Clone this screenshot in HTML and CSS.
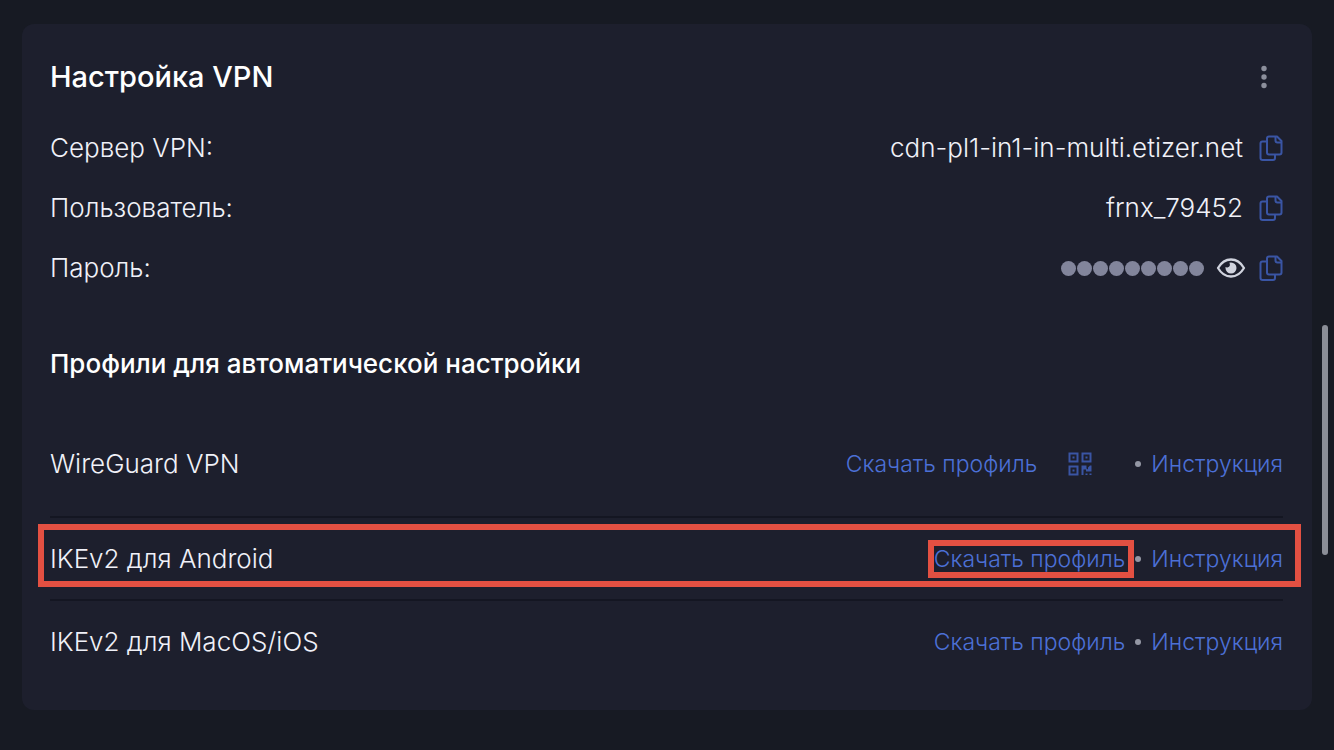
FILE: index.html
```
<!DOCTYPE html>
<html lang="ru">
<head>
  <meta charset="UTF-8">
  <meta name="viewport" content="width=device-width, initial-scale=1.0">
  <title>Настройка VPN</title>
  <link rel="stylesheet" href="styles.css">
</head>
<body>
  <!-- shared icons -->
  <svg class="sprite" aria-hidden="true">
    <symbol id="icon-copy" viewBox="0 0 24 26">
      <g fill="none" stroke="currentColor" stroke-width="2" stroke-linejoin="round">
        <path d="M10 1.500h8l4.500 4.500v11.500a2 2 0 0 1-2 2H10a2 2 0 0 1-2-2v-14a2 2 0 0 1 2-2z"/>
        <path d="M16.500 1.500v4a2 2 0 0 0 2 2h4"/>
        <path d="M8 6.500H3.500a2 2 0 0 0-2 2v14.500a2 2 0 0 0 2 2H14a2 2 0 0 0 2-2v-3.500"/>
      </g>
    </symbol>
  </svg>

  <main class="card">
    <header class="card-header">
      <h1>Настройка VPN</h1>
      <button class="icon-btn menu-btn" type="button" aria-label="Меню">
        <svg width="6" height="24" viewBox="0 0 6 24" fill="currentColor"><circle cx="3" cy="3.500" r="2.700"/><circle cx="3" cy="12" r="2.700"/><circle cx="3" cy="20.500" r="2.700"/></svg>
      </button>
    </header>

    <dl class="settings">
      <div class="setting">
        <dt>Сервер VPN:</dt>
        <dd>
          <span>cdn-pl1-in1-in-multi.etizer.net</span>
          <button class="icon-btn copy-btn" type="button" aria-label="Скопировать сервер"><svg width="24" height="26"><use href="#icon-copy"/></svg></button>
        </dd>
      </div>
      <div class="setting">
        <dt>Пользователь:</dt>
        <dd>
          <span>frnx_79452</span>
          <button class="icon-btn copy-btn" type="button" aria-label="Скопировать имя"><svg width="24" height="26"><use href="#icon-copy"/></svg></button>
        </dd>
      </div>
      <div class="setting">
        <dt>Пароль:</dt>
        <dd>
          <span class="mask"><i></i><i></i><i></i><i></i><i></i><i></i><i></i><i></i><i></i></span>
          <button class="icon-btn eye-btn" type="button" aria-label="Показать пароль">
            <svg width="30" height="22" viewBox="0 0 30 22"><path d="M2 11C5.500 5 10 2.500 15 2.500S24.500 5 28 11C24.500 17 20 19.500 15 19.500S5.500 17 2 11z" fill="none" stroke="currentColor" stroke-width="2.300" stroke-linejoin="round"/><path d="M15 5.500A5.500 5.500 0 1 1 9.500 11V10a2.600 2.600 0 0 0 2.500.2 2.600 2.600 0 0 0 1.800-3.100 3 3 0 0 0-.6-1.300z" fill="currentColor"/></svg>
          </button>
          <button class="icon-btn copy-btn" type="button" aria-label="Скопировать пароль"><svg width="24" height="26"><use href="#icon-copy"/></svg></button>
        </dd>
      </div>
    </dl>

    <h2>Профили для автоматической настройки</h2>

    <ul class="profiles">
      <li class="profile profile-tall">
        <span>WireGuard VPN</span>
        <div class="links">
          <a href="#">Скачать профиль</a>
          <button class="icon-btn qr-btn" type="button" aria-label="QR-код">
            <svg width="24" height="24" viewBox="0 0 24 24" fill="none" stroke="currentColor" stroke-width="2"><path d="M1.500 1.500h8v8h-8zM14.500 1.500h8v8h-8zM1.500 14.500h8v8h-8z"/><path d="M4.500 4.500h2v2h-2zM17.500 4.500h2v2h-2zM4.500 17.500h2v2h-2z" fill="currentColor" stroke="none"/><path d="M13.500 13.500h2v9.500h-2zM15.500 13.500h3v3l1.500 1v-2l2-2h1.500v6H18v-2h-2.500zM17.500 21.500h2V23h-2zM21.500 21.500h2V23h-2z" fill="currentColor" stroke="none"/></svg>
          </button>
          <i class="dot"></i>
          <a href="#">Инструкция</a>
        </div>
      </li>
      <li class="profile marked">
        <span>IKEv2 для Android</span>
        <div class="links">
          <a class="marked-link" href="#">Скачать профиль</a>
          <i class="dot"></i>
          <a href="#">Инструкция</a>
        </div>
      </li>
      <li class="profile">
        <span>IKEv2 для MacOS/iOS</span>
        <div class="links">
          <a href="#">Скачать профиль</a>
          <i class="dot"></i>
          <a href="#">Инструкция</a>
        </div>
      </li>
    </ul>
  </main>
  <div class="scroll-thumb"></div>
</body>
</html>
```
FILE: styles.css
```
* { box-sizing: border-box; margin: 0; padding: 0; }
body { font-family: Inter, sans-serif; font-size: 26px; font-weight: 300; line-height: 36px; background: #171a23; color: #f0f1f8; padding: 24px 22px; }
.sprite { display: none; }
.card { background: #1d1f2d; border-radius: 12px; padding: 28px; }
.card-header { display: flex; align-items: center; justify-content: space-between; height: 50px; margin-bottom: 16px; padding-right: 17px; }
h1 { font-size: 29px; font-weight: 500; color: #fff; }
h2 { font-size: 26px; font-weight: 500; color: #fff; margin: 48px 0 30px; }

.icon-btn { display: flex; border: none; background: none; cursor: pointer; }
.menu-btn { color: #8c8f9c; }
.copy-btn { color: #3a55a4; }
.eye-btn { color: #d0d3de; margin-right: -3px; }
.qr-btn { color: #3a55a4; margin: 0 33px 0 21px; }

.settings, .profiles { padding-right: 1px; }
.setting { display: flex; align-items: center; justify-content: space-between; height: 60px; }
.setting dd { display: flex; align-items: center; gap: 16px; }
.mask { display: flex; gap: 1px; margin-right: -4px; }
.mask i { width: 15px; height: 15px; border-radius: 50%; background: #82859b; }

.profiles { list-style: none; }
.profile { display: flex; align-items: center; justify-content: space-between; height: 83px; }
.profile + .profile { border-top: 2px solid #141622; }
.profile-tall { height: 104px; }
.links { display: flex; align-items: center; gap: 10px; font-size: 23px; }
.links a { color: #4c70d6; text-decoration: none; }
.dot { width: 6px; height: 6px; border-radius: 50%; background: #9497a4; }

/* highlight frames */
.marked, .marked-link { position: relative; }
.marked::after, .marked-link::after { content: ""; position: absolute; border: 6px solid #e35042; pointer-events: none; }
.marked::after { inset: 6px -18px 12px -12px; }
.marked-link::after { inset: -1px -9px -1px -6px; }

.scroll-thumb { position: fixed; top: 325px; right: 6px; width: 6px; height: 230px; border-radius: 3px; background: #8b8e97; }
```
